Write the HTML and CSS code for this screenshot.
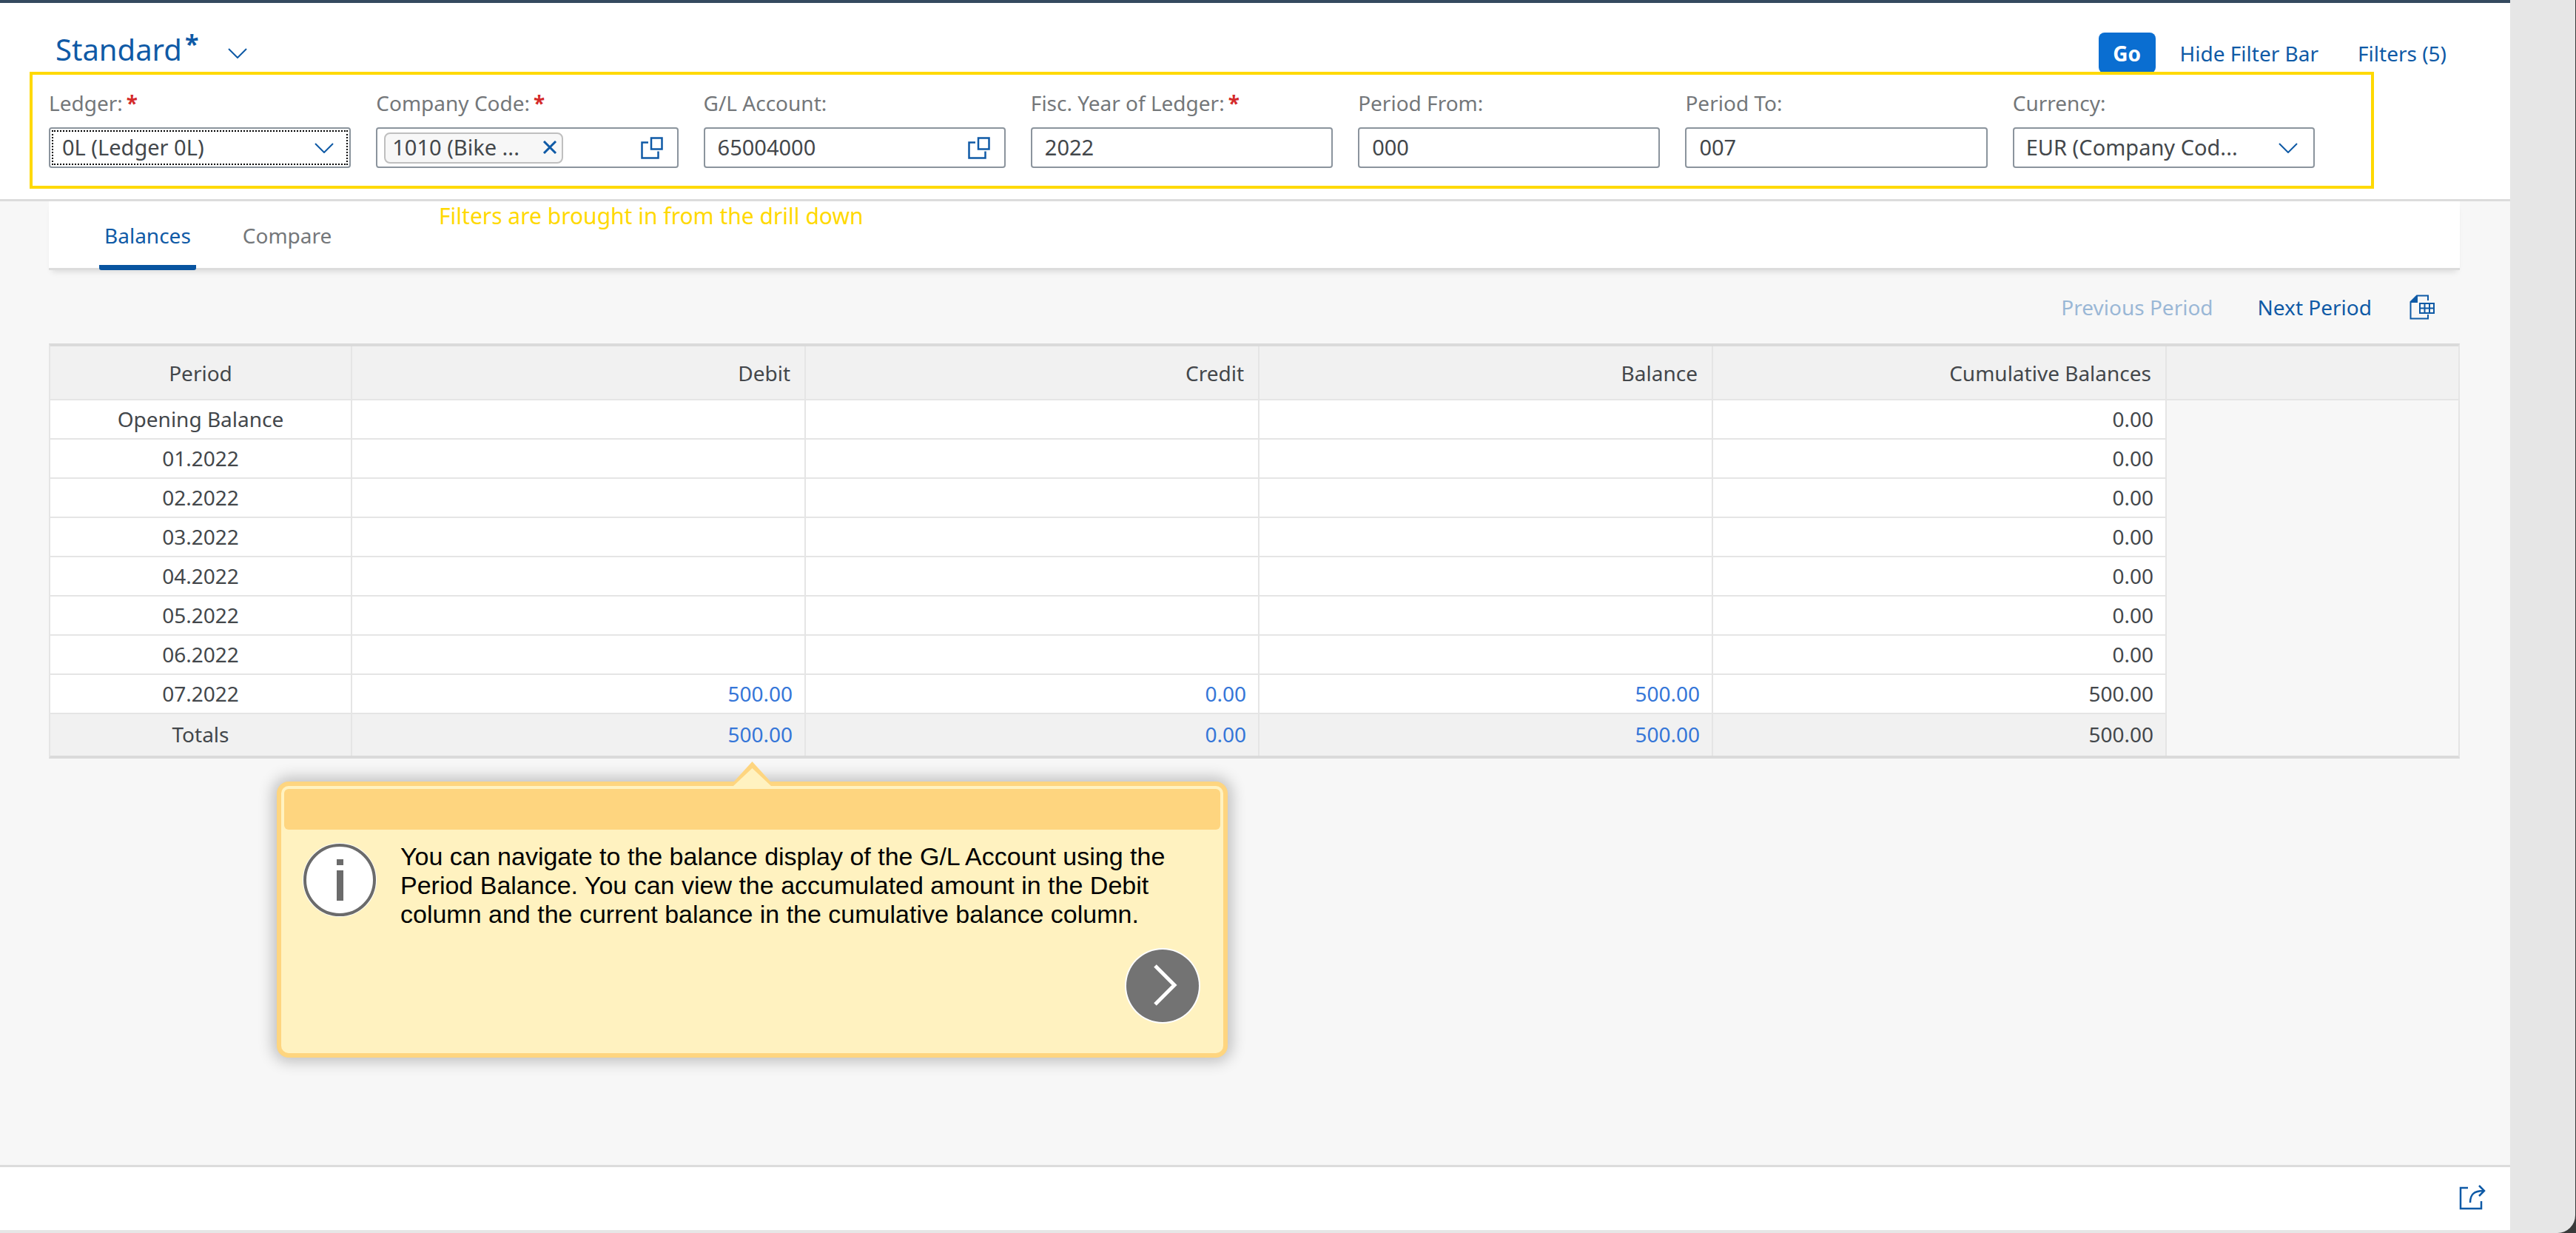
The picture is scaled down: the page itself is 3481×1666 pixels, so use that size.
FILE: index.html
```html
<!DOCTYPE html>
<html lang="en">
<head>
<meta charset="utf-8">
<title>Display G/L Account Balances</title>
<link rel="stylesheet" href="styles.css">
</head>
<body>
<svg class="sprite" aria-hidden="true">
  <symbol id="chevron" viewBox="0 0 26 14"><path d="M1 1l12 12L25 1" fill="none" stroke="currentColor" stroke-width="2"/></symbol>
  <symbol id="value-help" viewBox="0 0 30 30"><path d="M14 1.500h14.500v15H14zM10 7.500H1.500v21h22V19.500" fill="none" stroke="currentColor" stroke-width="2.500"/></symbol>
</svg>
<div class="shell">
  <main class="page">
    <header class="page-header">
      <div class="title-row">
        <button class="variant" type="button">
          <span class="variant-name">Standard<sup>*</sup></span>
          <svg class="chevron"><use href="#chevron"/></svg>
        </button>
        <div class="actions">
          <button class="go" type="button">Go</button>
          <button class="link-button" type="button">Hide Filter Bar</button>
          <button class="link-button" type="button">Filters (5)</button>
        </div>
      </div>
      <form class="filters">
        <div class="field">
          <label for="ledger">Ledger:<b>*</b></label>
          <div class="control select-control">
            <select id="ledger" class="focused"><option>0L (Ledger 0L)</option></select>
            <svg class="chevron"><use href="#chevron"/></svg>
          </div>
        </div>
        <div class="field">
          <label for="company">Company Code:<b>*</b></label>
          <div class="control box">
            <span class="token">1010 (Bike ...
              <button type="button" aria-label="Remove"><svg width="20" height="18" viewBox="0 0 20 18"><path d="M2 1l16 16M18 1L2 17" stroke="currentColor" stroke-width="3"/></svg></button>
            </span>
            <input id="company" type="text">
            <button class="help" type="button" aria-label="Value help"><svg><use href="#value-help"/></svg></button>
          </div>
        </div>
        <div class="field">
          <label for="account">G/L Account:</label>
          <div class="control box">
            <input id="account" class="padded" type="text" value="65004000">
            <button class="help" type="button" aria-label="Value help"><svg><use href="#value-help"/></svg></button>
          </div>
        </div>
        <div class="field">
          <label for="year">Fisc. Year of Ledger:<b>*</b></label>
          <div class="control box"><input id="year" class="padded" type="text" value="2022"></div>
        </div>
        <div class="field">
          <label for="from">Period From:</label>
          <div class="control box"><input id="from" class="padded" type="text" value="000"></div>
        </div>
        <div class="field">
          <label for="to">Period To:</label>
          <div class="control box"><input id="to" class="padded" type="text" value="007"></div>
        </div>
        <div class="field">
          <label for="currency">Currency:</label>
          <div class="control select-control">
            <select id="currency"><option>EUR (Company Cod...</option></select>
            <svg class="chevron"><use href="#chevron"/></svg>
          </div>
        </div>
      </form>
    </header>

    <div class="content">
      <nav class="tabs">
        <a class="tab active" href="#balances">Balances</a>
        <a class="tab" href="#compare">Compare</a>
        <p class="note">Filters are brought in from the drill down</p>
      </nav>

      <div class="toolbar">
        <button class="link-button" type="button" disabled>Previous Period</button>
        <button class="link-button" type="button">Next Period</button>
        <button class="icon-button" type="button" aria-label="Export to spreadsheet">
          <svg width="34" height="34" viewBox="0 0 34 34" fill="none" stroke="currentColor" stroke-width="2"><path d="M25 8V1.500H10L1.500 10v22.500H25V27"/><path d="M11 1v10H1z" fill="currentColor" stroke="none"/><path d="M14 12h19v13H14zM14 18.500h19M20.500 12v13M27 12v13"/></svg>
        </button>
      </div>

      <table class="balances" id="balances">
        <colgroup><col class="c-period"><col class="c-amount"><col class="c-amount"><col class="c-amount"><col class="c-amount"><col></colgroup>
        <thead>
          <tr><th>Period</th><th>Debit</th><th>Credit</th><th>Balance</th><th>Cumulative Balances</th><th></th></tr>
        </thead>
        <tbody>
          <tr><td>Opening Balance</td><td></td><td></td><td></td><td>0.00</td><td></td></tr>
          <tr><td>01.2022</td><td></td><td></td><td></td><td>0.00</td><td></td></tr>
          <tr><td>02.2022</td><td></td><td></td><td></td><td>0.00</td><td></td></tr>
          <tr><td>03.2022</td><td></td><td></td><td></td><td>0.00</td><td></td></tr>
          <tr><td>04.2022</td><td></td><td></td><td></td><td>0.00</td><td></td></tr>
          <tr><td>05.2022</td><td></td><td></td><td></td><td>0.00</td><td></td></tr>
          <tr><td>06.2022</td><td></td><td></td><td></td><td>0.00</td><td></td></tr>
          <tr><td>07.2022</td><td><a href="#debit">500.00</a></td><td><a href="#credit">0.00</a></td><td><a href="#balance">500.00</a></td><td>500.00</td><td></td></tr>
        </tbody>
        <tfoot>
          <tr><td>Totals</td><td><a href="#debit">500.00</a></td><td><a href="#credit">0.00</a></td><td><a href="#balance">500.00</a></td><td>500.00</td><td></td></tr>
        </tfoot>
      </table>
    </div>

    <footer class="page-footer">
      <button class="icon-button" type="button" aria-label="Share">
        <svg width="36" height="34" viewBox="0 0 36 34" fill="none" stroke="currentColor" stroke-width="2.500"><path d="M12 4H2v28h28V22"/><path d="M15 24C15 13 20 8 33 8M27 1l7 7-7 7"/></svg>
      </button>
    </footer>

    <aside class="callout">
      <svg class="pointer" width="51" height="37" viewBox="0 0 51 37"><path d="M0 28L25.500 0 51 28v9H0z" fill="#fed57f"/><path d="M0 33L25.500 9 51 33v4H0z" fill="#fff2c0"/></svg>
      <div class="callout-bar"></div>
      <div class="callout-body">
        <svg class="info" width="100" height="102" viewBox="0 0 100 102"><circle cx="50" cy="51" r="50" fill="#fff"/><circle cx="50" cy="51" r="47" fill="#fff" stroke="#6b6b6b" stroke-width="4"/><path d="M46 23h9v8h-9zM46 38h9v41h-9z" fill="#6b6b6b"/></svg>
        <p>You can navigate to the balance display of the G/L Account using the Period Balance. You can view the accumulated amount in the Debit column and the current balance in the cumulative balance column.</p>
      </div>
      <button class="next" type="button" aria-label="Next step">
        <svg width="102" height="102" viewBox="0 0 102 102"><circle cx="51" cy="51" r="51" fill="#fff"/><circle cx="51" cy="51" r="49" fill="#737373"/><path d="M41 24l26 26-26 26" fill="none" stroke="#fff" stroke-width="5"/></svg>
      </button>
    </aside>
  </main>
</div>
</body>
</html>
```
FILE: styles.css
```css
* { box-sizing: border-box; }

body {
  margin: 0;
  background: #3a3a3a;
  color: #43474b;
  font: 28px/36px "Noto Sans", sans-serif;
}

button, input, select { font: inherit; color: inherit; }
button { margin: 0; padding: 0; border: 0; background: none; color: #0f5aa6; }
svg { display: block; }
.sprite { position: absolute; width: 0; height: 0; }

.shell {
  min-height: 100vh;
  margin-right: 1px;
  padding: 0 88px 4px 0;
  display: flex;
  background: #e6e6e6;
  border-bottom-right-radius: 24px;
}
.page {
  position: relative;
  flex: 1;
  display: flex;
  flex-direction: column;
  background: #f7f7f7;
}

/* Header and filter bar */
.page-header {
  padding: 40px 184px 14px 40px;
  background: #fff;
  border-top: 4px solid #354a5f;
  border-bottom: 3px solid #dcdcdc;
}
.title-row {
  display: flex;
  justify-content: space-between;
  align-items: center;
  height: 55px;
  margin-right: -98px;
  padding-left: 35px;
}
.variant { display: flex; align-items: center; gap: 40px; }
.variant-name { padding-bottom: 9px; font-size: 40px; line-height: 46px; }
.variant-name sup {
  margin-left: 4px;
  font-size: 34px;
  font-weight: 700;
  line-height: 0;
  vertical-align: 10px;
}
.chevron { width: 26px; height: 14px; color: #0f5aa6; }
.actions { display: flex; align-items: center; gap: 13px; }
.go {
  width: 77px;
  height: 55px;
  border-radius: 8px;
  background: #0a6ed1;
  color: #fff;
  font-weight: 700;
}
.link-button { padding: 0 20px; }
.link-button:disabled { opacity: 0.4; color: #0f5aa6; }
.actions .link-button + .link-button { padding-right: 0; }

.filters {
  position: relative;
  display: grid;
  grid-template-columns: repeat(7, minmax(0, 1fr));
  gap: 34px;
  margin-top: -2px;
  padding: 20px 76px 24px 22px;
  border: 4px solid #ffd900;
}
.field { display: grid; grid-template-columns: minmax(0, 1fr); gap: 15px; }
.field label { color: #74777a; white-space: nowrap; }
.field label b { margin-left: 5px; color: #d42a2a; line-height: 0; }
.control { height: 55px; border-radius: 4px; background: #fff; font-size: 29px; }
.box { display: flex; align-items: center; border: 2px solid #8b949d; }
.box input {
  flex: 1;
  min-width: 0;
  padding: 0 0 2px;
  border: 0;
  outline: 0;
  background: none;
}
.box .padded { padding-left: 17px; }
.help { padding-right: 19px; }
.help svg { width: 30px; height: 30px; }
.token {
  display: flex;
  align-items: center;
  justify-content: space-between;
  flex: none;
  width: 242px;
  height: 42px;
  margin-left: 9px;
  padding: 0 6px 2px 9px;
  border: 2px solid #bfbfbf;
  border-radius: 8px;
  background: #f7f7f7;
}
.select-control { display: grid; align-items: center; }
.select-control > * { grid-area: 1 / 1; }
.select-control .chevron { justify-self: end; margin-right: 23px; pointer-events: none; }
.select-control select {
  width: 100%;
  height: 55px;
  padding: 0 60px 2px 16px;
  border: 2px solid #8b949d;
  border-radius: 4px;
  background: #fff;
  appearance: none;
}
.focused { outline: 2px dotted #000; outline-offset: -6px; }

/* Tabs and toolbar */
.content { flex: 1; padding: 0 68px 0 66px; }
.tabs {
  position: relative;
  display: flex;
  gap: 56px;
  padding-left: 68px;
  background: #fff;
  box-shadow: inset 0 -3px #dcdcdc, 0 6px 8px -4px rgba(0, 0, 0, 0.12);
}
.tab {
  padding: 28px 7px 22px;
  border-bottom: 7px solid transparent;
  color: #74777a;
  text-decoration: none;
}
.tab.active { border-color: #0854a0; border-radius: 0 0 3px 3px; color: #0f5aa6; }
.note {
  position: absolute;
  top: 2px;
  left: 527px;
  margin: 0;
  color: #ffd900;
  font-size: 30px;
}
.toolbar {
  display: flex;
  justify-content: flex-end;
  align-items: center;
  gap: 20px;
  padding: 32px 23px 31px 0;
}
.icon-button { padding: 0 11px; }

/* Balances table */
.balances {
  width: 100%;
  table-layout: fixed;
  border-spacing: 0;
  border: solid #e5e5e5;
  border-width: 4px 2px;
  border-top-color: #dadada;
  border-bottom-color: #dadada;
}
.c-period { width: 408px; }
.c-amount { width: 613px; }
.balances th, .balances td {
  height: 53px;
  padding: 0 16px 2px;
  border: solid #e5e5e5;
  border-width: 0 2px 2px 0;
  background: #fff;
  font-weight: 400;
  text-align: right;
}
.balances th { height: 73px; padding: 0 19px; background: #f1f1f1; }
.balances tfoot td { height: 56px; border-bottom: 0; background: #f1f1f1; }
.balances th:first-child, .balances td:first-child { padding-left: 0; padding-right: 0; text-align: center; }
.balances th:last-child { border-right: 0; }
.balances td:last-child, .balances tfoot td:last-child { border: 0; background: none; }
.balances a { color: #3576d8; text-decoration: none; }

.page-footer {
  display: flex;
  justify-content: flex-end;
  align-items: center;
  height: 88px;
  padding: 0 22px 4px 0;
  background: #fff;
  border-top: 3px solid #dcdcdc;
}

/* Guided-tour callout */
.callout {
  position: absolute;
  top: 1056px;
  left: 374px;
  width: 1285px;
  padding: 4px;
  border: 6px solid #fed57f;
  border-radius: 16px;
  background: #fff2c0;
  box-shadow: 0 0 20px 5px rgba(0, 0, 0, 0.24);
  color: #000;
  font: 34px/39px "Liberation Sans", sans-serif;
}
.pointer { position: absolute; top: -33px; left: 611px; }
.callout-bar { height: 55px; border-radius: 6px; background: #fed57f; }
.callout-body { display: flex; gap: 32px; padding: 17px 25px 26px; }
.callout-body p { flex: 1; max-width: 1050px; margin: 0; }
.info { flex: none; }
.next { display: block; margin: 0 27px 36px auto; }
```
